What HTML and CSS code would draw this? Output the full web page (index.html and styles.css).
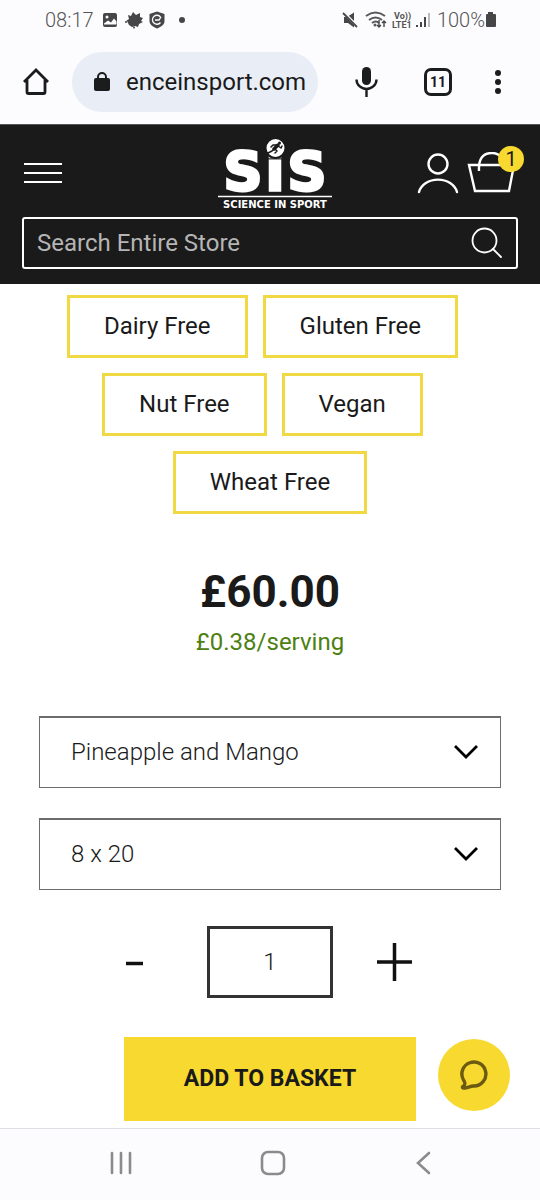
FILE: index.html
```html
<!DOCTYPE html>
<html lang="en">
<head>
<meta charset="utf-8">
<meta name="viewport" content="width=device-width, initial-scale=1">
<title>Science in Sport</title>
<link rel="stylesheet" href="styles.css">
</head>
<body>
<div class="status">
  <span class="status-text">08:17</span>
  <svg class="status-left" width="86" height="20" viewBox="0 0 86 20" aria-hidden="true">
    <rect x="1" y="3" width="14" height="14" rx="2" fill="#464648"/>
    <circle cx="5" cy="7" r="1.500" fill="#fcfcff"/><path d="M2 13.500l4-3 3 2 3-4 2.500 3v3H2z" fill="#fcfcff"/>
    <path d="M26 5l3 1 2-4 3 3 4-2v4l3 1-2 3 2 1-4 2-1 3-3-1-3 1-3-2-2-4-1 0 3-2z" fill="#464648"/>
    <circle cx="24" cy="12" r="1" fill="#464648"/><circle cx="32" cy="17.500" r="1" fill="#464648"/>
    <path d="M55 1.500l7.500 2.500v7c0 4-4 6-7.500 7.500-3.500-1.500-7.500-3.500-7.500-7.500V4z" fill="#464648"/>
    <path d="M58.500 7a4.500 4.500 0 1 0 0 5.500M53 10h4l2-3" fill="none" stroke="#fcfcff" stroke-width="1.300"/>
    <circle cx="80" cy="10" r="3" fill="#464648"/>
  </svg>
  <span class="spacer"></span>
  <svg class="status-right" width="90" height="20" viewBox="0 0 90 20" aria-hidden="true">
    <path d="M2 7h3l7-4.500v15L6 13H2z" fill="#464648"/>
    <path d="M1 2l15 15" stroke="#fcfcff" stroke-width="3"/><path d="M1 3l14 14" stroke="#464648" stroke-width="1.800"/>
    <g fill="none" stroke="#58585a" stroke-width="2"><path d="M24 6q9.500-7 19 0M27 10q6.500-5 13 0M30 13q4-3 7 0"/></g>
    <circle cx="33" cy="15" r="1.500" fill="#58585a"/>
    <path d="M37 10v7m-2-2l2 2 2-2M42 17v-6m-2 2l2-2 2 2" fill="none" stroke="#464648" stroke-width="1.400"/>
    <text class="volte" x="52" y="9">Vo))</text><text class="volte" x="50" y="18">LTE1</text>
    <path d="M75 15v2M79 12v5M83 7v10" stroke="#464648" stroke-width="2"/><path d="M87 3v14" stroke="#bbb" stroke-width="2"/>
  </svg>
  <span class="status-text">100%</span>
  <svg width="12" height="20" viewBox="0 0 12 20" aria-hidden="true"><path d="M3 2h5v2h2q1 0 1 1v11q0 1-1 1H2q-1 0-1-1V5q0-1 1-1h1z" fill="#464648"/></svg>
</div>
<div class="browser">
  <button class="plain" aria-label="Home"><svg width="28" height="28" viewBox="0 0 28 28"><path d="M2 14L14 2l12 12M5 12v12q0 1.500 1.500 1.500h15q1.500 0 1.500-1.500V12" fill="none" stroke="#1b1c1e" stroke-width="2.800"/></svg></button>
  <div class="url">
    <svg width="16" height="20" viewBox="0 0 16 20" aria-hidden="true"><rect x="0" y="6" width="16" height="13" rx="2" fill="#1b1c1e"/><path d="M4 7V5a4 4 0 0 1 8 0v2" fill="none" stroke="#1b1c1e" stroke-width="2"/></svg>
    <span>enceinsport.com</span>
  </div>
  <button class="plain" aria-label="Voice search"><svg width="24" height="32" viewBox="0 0 24 32"><rect x="8" y="1" width="9" height="18" rx="4.500" fill="#1b1c1e"/><path d="M2.500 13.500a10 9.500 0 0 0 20 0M12.500 23v8" fill="none" stroke="#1b1c1e" stroke-width="2.400"/></svg></button>
  <button class="tabs" aria-label="11 open tabs">11</button>
  <button class="plain" aria-label="More"><svg width="8" height="28" viewBox="0 0 8 28" fill="#1b1c1e"><circle cx="4" cy="5" r="3"/><circle cx="4" cy="14" r="3"/><circle cx="4" cy="23" r="3"/></svg></button>
</div>
<header class="header">
  <div class="header-top">
    <button class="plain menu" aria-label="Menu"><svg width="38" height="22" viewBox="0 0 38 22" stroke="#fff" stroke-width="2"><path d="M0 2h38M0 11h38M0 20h38"/></svg></button>
    <a class="logo" href="#" aria-label="Science in Sport"><svg width="116" height="72" viewBox="0 0 116 72">
      <text class="logo-big" y="53"><tspan x="26">S</tspan><tspan x="58">i</tspan><tspan x="90">S</tspan></text>
      <circle cx="58.500" cy="11" r="10" fill="#fff" stroke="#1a1a1a" stroke-width="2"/>
      <g fill="none" stroke="#1a1a1a" stroke-linecap="round" stroke-linejoin="round"><path d="M61 8l-4 4" stroke-width="3.500"/><path d="M57 12l-2 2-4 2M58 12l2 2-2 2M60 8l-4 0-2 2M61 9l3 2 1-2" stroke-width="1.500"/></g>
      <circle cx="62.500" cy="6" r="1.500" fill="#1a1a1a"/>
      <path d="M1 59.500h114" stroke="#fff" stroke-width="1.500"/>
      <text class="logo-small" x="58" y="71">SCIENCE IN SPORT</text>
    </svg></a>
    <div class="account">
      <a href="#" aria-label="Account"><svg width="42" height="42" viewBox="0 0 42 42" fill="none" stroke="#fff" stroke-width="2.400" stroke-linecap="round"><circle cx="21" cy="12" r="9.500"/><path d="M2 40a19.500 16 0 0 1 38 0"/></svg></a>
      <a class="basket" href="#" aria-label="Basket, 1 item"><svg width="50" height="42" viewBox="0 0 50 42" fill="none" stroke="#fff" stroke-width="2.400"><path d="M2 13h45l-5 26H8zM12 19q-1-18 13-18 12 0 12 16"/></svg><span class="count">1</span></a>
    </div>
  </div>
  <form class="search">
    <input type="search" placeholder="Search Entire Store" aria-label="Search Entire Store">
    <button type="button" class="plain" aria-label="Search"><svg width="32" height="32" viewBox="0 0 32 32" fill="none" stroke="#fff" stroke-width="1.800" stroke-linecap="round"><circle cx="13.500" cy="13.500" r="12"/><path d="M22 22l8 8"/></svg></button>
  </form>
</header>
<main class="main">
  <ul class="chips"><li>Dairy Free</li><li>Gluten Free</li><li>Nut Free</li><li>Vegan</li><li>Wheat Free</li></ul>
  <p class="price">£60.00</p>
  <p class="serving">£0.38/serving</p>
  <div class="field">
    <select aria-label="Flavour"><option>Pineapple and Mango</option></select>
    <svg class="chevron" width="26" height="16" viewBox="0 0 26 16" aria-hidden="true"><path d="M2 2l11 11L24 2" fill="none" stroke="#000" stroke-width="2.800"/></svg>
  </div>
  <div class="field">
    <select aria-label="Pack size"><option>8 x 20</option></select>
    <svg class="chevron" width="26" height="16" viewBox="0 0 26 16" aria-hidden="true"><path d="M2 2l11 11L24 2" fill="none" stroke="#000" stroke-width="2.800"/></svg>
  </div>
  <div class="quantity">
    <button class="plain" aria-label="Decrease quantity"><svg width="60" height="48" viewBox="0 0 60 48"><path d="M5 25.500h17" stroke="#111" stroke-width="3.500"/></svg></button>
    <input type="text" inputmode="numeric" value="1" aria-label="Quantity">
    <button class="plain" aria-label="Increase quantity"><svg width="60" height="48" viewBox="0 0 60 48"><path d="M18 24h35M35.500 5v38" stroke="#111" stroke-width="3.500"/></svg></button>
  </div>
  <button class="add">ADD TO BASKET</button>
  <button class="chat" aria-label="Chat"><svg width="32" height="32" viewBox="0 0 32 32"><path d="M5.500 21A12 12 0 1 1 16 27c-3-.5-5 1.500-9 2-3 .5-3-1-1.500-2 2-1.500 2-3 0-6z" fill="none" stroke="#6b5a10" stroke-width="3.400" stroke-linejoin="round"/></svg></button>
</main>
<nav class="system" aria-label="System">
  <button class="plain" aria-label="Recent apps"><svg width="24" height="24" viewBox="0 0 24 24" stroke="#8b8b8e" stroke-width="2.600" stroke-linecap="round"><path d="M3 2v20M12 2v20M21 2v20"/></svg></button>
  <button class="plain" aria-label="Home screen"><svg width="26" height="26" viewBox="0 0 26 26"><rect x="2" y="2" width="22" height="22" rx="6" fill="none" stroke="#8b8b8e" stroke-width="2.600"/></svg></button>
  <button class="plain" aria-label="Back"><svg width="24" height="24" viewBox="0 0 24 24"><path d="M17 2L6 12l11 10" fill="none" stroke="#8b8b8e" stroke-width="2.600" stroke-linecap="round"/></svg></button>
</nav>
</body>
</html>
```
FILE: styles.css
```css
* { box-sizing: border-box; }
body {
  margin: 0;
  min-height: 100vh;
  display: flex;
  flex-direction: column;
  background: #fff;
  color: #1a1a1a;
  font-family: Roboto, "Liberation Sans", sans-serif;
  font-size: 24px;
  line-height: 32px;
}
svg { display: block; flex: none; }
button, input, select { font: inherit; color: inherit; border-radius: 0; }
.plain { display: block; padding: 0; border: 0; background: none; }

.status {
  display: flex;
  align-items: center;
  height: 40px;
  padding: 0 43px 0 45px;
  background: #fcfcff;
}
.status-text { font-size: 20px; color: #555; font-weight: 300; }
.status-left { margin-left: 8px; }
.status-right { margin-right: 5px; }
.spacer { flex: 1; }
.volte { font-size: 9px; font-weight: 700; fill: #555; }

.browser {
  display: flex;
  align-items: center;
  height: 85px;
  padding: 0 38px 0 22px;
  background: #fcfcff;
  border-bottom: 1px solid #555;
}
.url {
  flex: 1;
  display: flex;
  align-items: center;
  gap: 16px;
  height: 60px;
  margin: 0 36px 0 22px;
  padding: 0 12px 0 22px;
  overflow: hidden;
  border-radius: 30px;
  background: #e9eef6;
}
.tabs {
  width: 28px;
  height: 28px;
  margin: 0 42px 0 46px;
  padding: 0;
  border: 3px solid #1b1c1e;
  border-radius: 7px;
  background: none;
  font-size: 14px;
  line-height: 20px;
  font-weight: 700;
}

.header { padding: 12px 22px 15px; background: #1a1a1a; color: #fff; }
.header-top {
  display: grid;
  grid-template-columns: 1fr auto 1fr;
  align-items: center;
  margin-bottom: 8px;
}
.menu { margin-left: 2px; }
.logo { margin-left: 10px; }
.logo-big {
  font: bold 54px "DejaVu Sans", sans-serif;
  fill: #fff;
  stroke: #fff;
  stroke-width: 3px;
  text-anchor: middle;
}
.logo-small { font: bold 10px "DejaVu Sans", sans-serif; fill: #fff; text-anchor: middle; }
.account { display: flex; justify-content: flex-end; gap: 8px; margin-right: 1px; }
.basket { position: relative; }
.count {
  position: absolute;
  top: -6px;
  right: -7px;
  width: 26px;
  height: 26px;
  border-radius: 50%;
  background: #f8d92f;
  color: #1a1a1a;
  font-size: 20px;
  line-height: 26px;
  text-align: center;
}
.search {
  display: flex;
  align-items: center;
  height: 52px;
  margin: 0;
  padding: 0 13px;
  border: 2px solid #fff;
  border-radius: 3px;
}
.search input {
  flex: 1;
  min-width: 0;
  padding: 0;
  border: 0;
  outline: 0;
  background: none;
  appearance: none;
}
.search input::placeholder { color: #b5b5b5; opacity: 1; }

.main { position: relative; flex: 1; padding: 11px 39px 7px; text-align: center; }
.chips {
  display: flex;
  flex-wrap: wrap;
  justify-content: center;
  row-gap: 15px;
  margin: 0 0 56px;
  padding: 0;
  list-style: none;
}
.chips li {
  margin-right: 15px;
  padding: 12px 34px 13px;
  height: 63px;
  border: 3px solid #f0d943;
}
.chips li:last-child { margin-right: 0; }
.price { margin: 0; font-size: 44px; line-height: 44px; font-weight: 700; }
.serving { margin: 12px 0 58px; color: #4d8011; }
.field { position: relative; margin-bottom: 30px; }
.field select {
  display: block;
  width: 100%;
  height: 72px;
  padding: 0 70px 2px 31px;
  border: 1px solid #6c6c6c;
  border-top-width: 2px;
  background: #fff;
  font-weight: 300;
  appearance: none;
}
.chevron { position: absolute; top: 28px; right: 22px; pointer-events: none; }
.quantity {
  display: flex;
  justify-content: center;
  align-items: center;
  gap: 26px;
  margin: 36px 0 39px;
}
.quantity input {
  width: 126px;
  height: 72px;
  padding: 0;
  border: 3px solid #333;
  background: #fff;
  font-weight: 300;
  text-align: center;
}
.add {
  width: 63%;
  height: 84px;
  padding: 0;
  border: 0;
  background: #f8d92f;
  font-size: 23px;
  font-weight: 700;
}
.chat {
  position: absolute;
  right: 30px;
  bottom: 17px;
  display: grid;
  place-items: center;
  width: 72px;
  height: 72px;
  padding: 0;
  border: 0;
  border-radius: 50%;
  background: #f8d92f;
}

.system {
  display: flex;
  justify-content: space-between;
  align-items: center;
  height: 72px;
  padding: 0 104px 4px 109px;
  border-top: 1px solid #dcdfe4;
  background: #fcfcff;
}
```
